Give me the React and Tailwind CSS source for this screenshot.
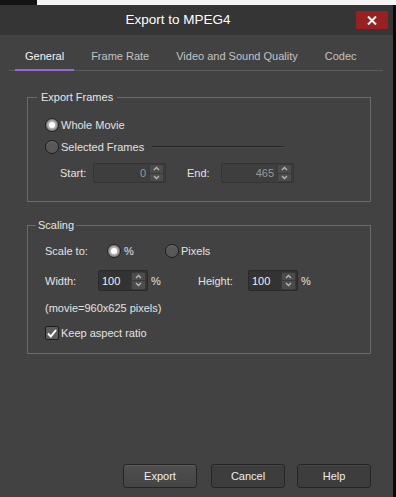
import React from 'react'

const TABS = ['General', 'Frame Rate', 'Video and Sound Quality', 'Codec']

function Radio({ checked }) {
  return (
    <span
      className={
        checked
          ? 'w-[14px] h-[14px] shrink-0 rounded-full border border-[#1c1c1c] bg-[#6c6c6c] flex items-center justify-center'
          : 'w-[14px] h-[14px] shrink-0 rounded-full border border-[#1c1c1c] bg-[#585858] shadow-[inset_0_1px_1px_rgba(255,255,255,0.15)]'
      }
    >
      {checked && (
        <span className="w-[6px] h-[6px] rounded-full bg-white shadow-[0_0_2px_2px_rgba(255,255,255,0.55)]" />
      )}
    </span>
  )
}

function Spinner() {
  return (
    <div className="w-[15px] h-[18px] flex flex-col rounded-[2px] bg-[#4c4c4c] border border-[#3a3a3a]">
      <div className="flex-1 flex items-center justify-center border-b border-[#3a3a3a]">
        <svg width="7" height="5" viewBox="0 0 7 5">
          <path d="M1 4 L3.5 1.5 L6 4" fill="none" stroke="#b8b8b8" strokeWidth="1.3" />
        </svg>
      </div>
      <div className="flex-1 flex items-center justify-center">
        <svg width="7" height="5" viewBox="0 0 7 5">
          <path d="M1 1 L3.5 3.5 L6 1" fill="none" stroke="#b8b8b8" strokeWidth="1.3" />
        </svg>
      </div>
    </div>
  )
}

function NumberField({ value, disabled, className }) {
  return (
    <div
      className={
        'flex items-center rounded-[2px] border ' +
        (disabled ? 'bg-[#3e3e3e] border-[#353535] ' : 'bg-[#333333] border-[#2a2a2a] ') +
        className
      }
    >
      <span
        className={
          disabled
            ? 'flex-1 text-right pr-[3px] text-[#9a9a9a]'
            : 'flex-1 text-left pl-[3px] text-[#f0f0f0]'
        }
      >
        {value}
      </span>
      <div className="pr-[1px]">
        <Spinner />
      </div>
    </div>
  )
}

function Button({ children, primary, className = '' }) {
  return (
    <button
      className={
        'w-[74px] h-[24px] rounded-[3px] border border-[#252525] text-[#eeeeee] ' +
        (primary
          ? 'bg-gradient-to-b from-[#4f4f4f] to-[#454545] shadow-[inset_0_1px_0_rgba(255,255,255,0.08)] '
          : 'bg-[#3d3d3d] shadow-[inset_0_1px_0_rgba(255,255,255,0.05)] ') +
        className
      }
    >
      {children}
    </button>
  )
}

export default function App() {
  return (
    <div className="w-[396px] h-[497px] overflow-hidden bg-black font-['Liberation_Sans',Arial,sans-serif] text-[11px] leading-[14px] text-[#e2e2e2]">
      {/* strip above the window */}
      <div className="flex h-[5px]">
        <div className="w-[37px] bg-[#141414]" />
        <div className="flex-1 bg-[#f5f5f5]" />
      </div>

      <div className="flex h-[492px]">
        <div className="w-[393px] flex flex-col">
          {/* Title bar */}
          <div className="h-[30px] bg-[#353535] flex items-center">
            <div className="flex-1 text-center text-[13.5px] text-white">Export to MPEG4</div>
            <div className="w-[32px] h-[18px] mr-[5px] bg-[#982020] flex items-center justify-center">
              <svg width="10" height="9" viewBox="0 0 10 9">
                <path d="M1 0.5 L9 8.5 M9 0.5 L1 8.5" stroke="#ffffff" strokeWidth="2" />
              </svg>
            </div>
          </div>

          {/* Body */}
          <div className="flex-1 bg-[#424242] flex flex-col">
            {/* Tabs */}
            <div className="ml-[9px] mr-[10px] flex pl-[6px] gap-[7px] border-b border-[#5a5a5a]">
              {TABS.map((t, i) => (
                <div
                  key={t}
                  className={
                    i === 0
                      ? 'h-[36px] -mb-[1px] pt-[14px] px-[10px] border-b-[2px] border-[#9966d6] text-[#f4f4f4]'
                      : 'h-[36px] -mb-[1px] pt-[14px] px-[10px] border-b-[2px] border-transparent text-[#c2c2c2]'
                  }
                >
                  {t}
                </div>
              ))}
            </div>

            <div className="ml-[27px] mr-[22px] flex flex-col flex-1">
              {/* Export Frames */}
              <fieldset className="mt-[19px] border border-[#6a6a6a]">
                <legend className="ml-[9px] px-[4px] text-[#e6e6e6]">Export Frames</legend>
                <div className="pl-[17px] pb-[18px]">
                  <div className="mt-[14px] flex items-center h-[14px]">
                    <Radio checked />
                    <span className="ml-[2px]">Whole Movie</span>
                  </div>
                  <div className="mt-[8px] flex items-center h-[14px]">
                    <Radio />
                    <span className="ml-[2px]">Selected Frames</span>
                    <span className="ml-[8px] w-[132px] h-[2px] border-t border-[#262626] border-b border-b-[#4a4a4a]" />
                  </div>
                  <div className="mt-[9px] ml-[15px] flex items-center">
                    <span className="w-[33px]">Start:</span>
                    <NumberField value="0" disabled className="w-[73px] h-[20px]" />
                    <span className="ml-[21px] w-[34px]">End:</span>
                    <NumberField value="465" disabled className="w-[73px] h-[20px]" />
                  </div>
                </div>
              </fieldset>

              {/* Scaling */}
              <fieldset className="mt-[16px] border border-[#6a6a6a]">
                <legend className="ml-[8px] px-[2px] text-[#e6e6e6]">Scaling</legend>
                <div className="pl-[17px] pb-[13px]">
                  <div className="mt-[12px] flex items-center h-[14px]">
                    <span className="w-[62px]">Scale to:</span>
                    <div className="w-[58px] flex items-center">
                      <Radio checked />
                      <span className="ml-[3px]">%</span>
                    </div>
                    <Radio />
                    <span className="ml-[2px]">Pixels</span>
                  </div>
                  <div className="mt-[12px] flex items-center">
                    <span className="w-[53px]">Width:</span>
                    <NumberField value="100" className="w-[50px] h-[21px]" />
                    <span className="ml-[3px] w-[47px]">%</span>
                    <span className="w-[50px]">Height:</span>
                    <NumberField value="100" className="w-[50px] h-[21px]" />
                    <span className="ml-[3px]">%</span>
                  </div>
                  <div className="mt-[10px]">(movie=960x625 pixels)</div>
                  <div className="mt-[11px] flex items-center h-[14px]">
                    <span className="w-[14px] h-[14px] rounded-[2px] border border-[#1c1c1c] bg-[#5c5c5c] flex items-center justify-center">
                      <svg width="10" height="9" viewBox="0 0 10 9">
                        <path d="M1 4.5 L3.8 7.5 L9 1" fill="none" stroke="#ffffff" strokeWidth="2" />
                      </svg>
                    </span>
                    <span className="ml-[2px]">Keep aspect ratio</span>
                  </div>
                </div>
              </fieldset>

              {/* Buttons */}
              <div className="mt-auto mb-[9px] flex justify-end">
                <Button primary>Export</Button>
                <Button className="ml-[14px]">Cancel</Button>
                <Button className="ml-[12px]">Help</Button>
              </div>
            </div>
          </div>
        </div>
        <div className="flex-1 bg-[#0a0a0a]" />
      </div>
    </div>
  )
}
